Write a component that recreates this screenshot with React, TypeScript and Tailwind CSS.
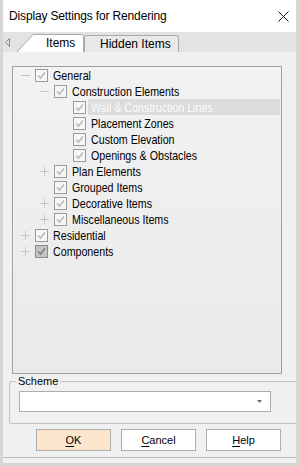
import React from 'react';

type Node = {
    label: string;
    level: number;
    expander?: 'open' | 'closed';
    mixed?: boolean;
    selected?: boolean;
};

const nodes: Node[] = [
    { label: 'General', level: 0, expander: 'open' },
    { label: 'Construction Elements', level: 1, expander: 'open' },
    { label: 'Wall & Construction Lines', level: 2, selected: true },
    { label: 'Placement Zones', level: 2 },
    { label: 'Custom Elevation', level: 2 },
    { label: 'Openings & Obstacles', level: 2 },
    { label: 'Plan Elements', level: 1, expander: 'closed' },
    { label: 'Grouped Items', level: 1 },
    { label: 'Decorative Items', level: 1, expander: 'closed' },
    { label: 'Miscellaneous Items', level: 1, expander: 'closed' },
    { label: 'Residential', level: 0, expander: 'closed' },
    { label: 'Components', level: 0, expander: 'closed', mixed: true },
];

const uiFont = "font-['Liberation_Sans',Arial,sans-serif]";

const Expander = ({ kind }: { kind?: 'open' | 'closed' }) => (
    <span className="w-[14px] h-[16px] flex items-center shrink-0">
        {kind && (
            <svg width="9" height="9" viewBox="0 0 9 9">
                <path d="M0 4.5H9" stroke="#c6c6c6" strokeWidth="1" />
                {kind === 'closed' && <path d="M4.5 0V9" stroke="#c6c6c6" strokeWidth="1" />}
            </svg>
        )}
    </span>
);

const CheckBox = ({ mixed }: { mixed?: boolean }) => (
    <span
        className={`w-[13px] h-[13px] shrink-0 border flex items-center justify-center ${
            mixed ? 'bg-[#c4c4c4] border-[#8a8a8a]' : 'bg-[#f7f7f7] border-[#9a9a9a]'
        }`}
    >
        <svg width="9" height="9" viewBox="0 0 9 9">
            <path
                d="M1 4.5L3.5 7L8 1.5"
                fill="none"
                stroke={mixed ? '#7c7c7c' : '#b9b9b9'}
                strokeWidth="1.6"
            />
        </svg>
    </span>
);

// the tree uses a narrow face; Liberation Sans squeezed to Arial Narrow proportions
const TreeRow = ({ node }: { node: Node }) => (
    <div className="h-[16px] flex items-center" style={{ paddingLeft: 8 + node.level * 19 }}>
        <Expander kind={node.expander} />
        <CheckBox mixed={node.mixed} />
        <span
            className={`ml-[2px] px-[3px] h-[16px] flex items-center ${
                node.selected ? 'flex-1 mr-[1px] bg-[#dcdcdc] text-[#fbfbfb]' : 'text-black'
            }`}
        >
            <span className="inline-block text-[13px] leading-none whitespace-nowrap origin-left scale-x-[0.82]">
                {node.label}
            </span>
        </span>
    </div>
);

const Btn = ({ first, rest, primary }: { first: string; rest: string; primary?: boolean }) => (
    <button
        className={`w-[75px] h-[22px] border border-[#adadad] text-[11px] text-black ${
            primary ? 'bg-[#fce5cd]' : 'bg-white'
        }`}
    >
        <span className="underline underline-offset-2">{first}</span>
        {rest}
    </button>
);

export default function App() {
    return (
        <div className={`w-[299px] h-[466px] flex flex-col bg-[#f0f0f0] border-x-[3px] border-b-[3px] border-[#d6d6d6] ${uiFont}`}>
            {/* title bar */}
            <div className="h-[32px] bg-white flex items-center justify-between pl-[6px] pr-[6px] shrink-0">
                <span className="text-[12px] tracking-[-0.15px] text-black">Display Settings for Rendering</span>
                <svg width="11" height="11" viewBox="0 0 11 11" className="mr-[1px]">
                    <path d="M0.5 0.5L10.5 10.5M10.5 0.5L0.5 10.5" stroke="#111" strokeWidth="1" />
                </svg>
            </div>

            {/* tab strip */}
            <div className="h-[20px] bg-[#e3e3e3] flex items-end shrink-0 relative">
                <svg width="5" height="9" viewBox="0 0 5 9" className="absolute left-[2px] top-[6px]">
                    <path d="M4.5 0.5L0.5 4.5L4.5 8.5Z" fill="none" stroke="#8a8a8a" strokeWidth="1" />
                </svg>
                <div className="relative ml-[14px] w-[67px] h-[18px] flex items-center">
                    <svg width="67" height="18" viewBox="0 0 67 18" className="absolute inset-0">
                        <path d="M0 18L16 0.5H64.5Q66.5 0.5 66.5 2.5V18Z" fill="#fff" />
                        <path d="M0 18L16 0.5H64.5Q66.5 0.5 66.5 2.5V18" fill="none" stroke="#a9a9a9" strokeWidth="1" />
                    </svg>
                    <span className="relative pl-[29px] text-[12px] text-black">Items</span>
                </div>
                <div className="w-[95px] h-[17px] bg-[#e9e9e9] border border-b-0 border-[#a9a9a9] rounded-t-[3px] flex items-center pl-[15px]">
                    <span className="text-[12px] text-black">Hidden Items</span>
                </div>
            </div>

            {/* tab page */}
            <div className="flex-1 flex flex-col">
                <div className="mt-[14px] ml-[9px] w-[270px] h-[308px] border border-[#a0a0a0] bg-gradient-to-b from-[#f2f2f2] to-[#eaeaea]">
                    {nodes.map((n, i) => (
                        <TreeRow key={i} node={n} />
                    ))}
                </div>

                <div className="mt-[7px] ml-[6px] h-[43px] border border-r-0 border-[#c2c2c2] rounded-l-[3px] flex flex-col">
                    <span className="-mt-[8px] ml-[6px] px-[2px] self-start bg-[#f0f0f0] text-[11px] leading-[14px] text-black">
                        Scheme
                    </span>
                    <div className="mt-[3px] ml-[9px] w-[252px] h-[21px] bg-white border border-[#adadad] flex items-center justify-end pr-[8px]">
                        <svg width="5" height="3" viewBox="0 0 5 3">
                            <path d="M0 0H5L2.5 3Z" fill="#707070" />
                        </svg>
                    </div>
                </div>

                <div className="mt-[5px] ml-[33px] flex gap-[10px]">
                    <Btn first="O" rest="K" primary />
                    <Btn first="C" rest="ancel" />
                    <Btn first="H" rest="elp" />
                </div>

                <div className="mt-auto mb-[5px] h-px bg-[#bdbdbd]" />
            </div>
        </div>
    );
}
